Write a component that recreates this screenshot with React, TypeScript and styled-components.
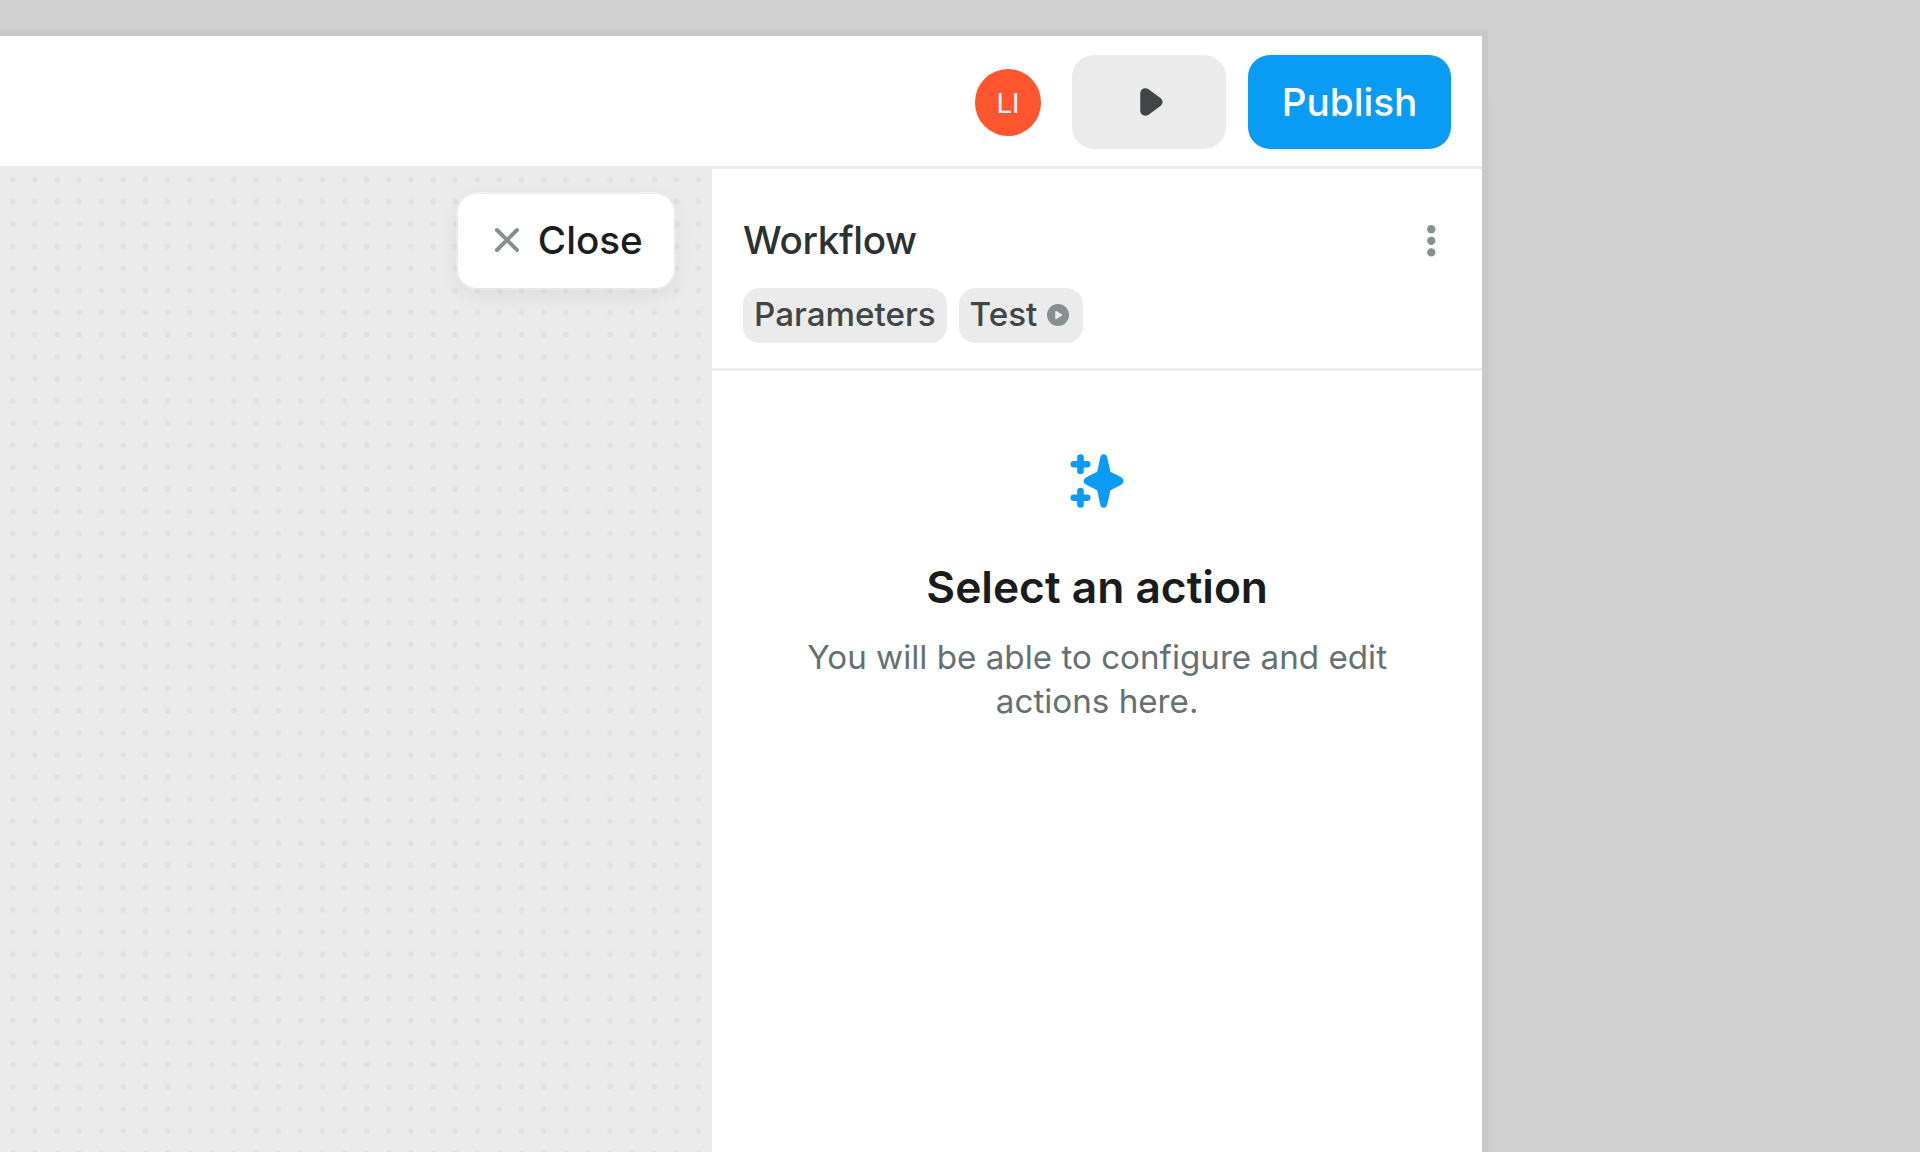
import React from "react";
import styled, { createGlobalStyle } from "styled-components";

const GlobalStyle = createGlobalStyle`
  * { box-sizing: border-box; }
  body { margin: 0; background: #d0d0d0; }
  button { border: 0; padding: 0; margin: 0; font: inherit; }
  svg { display: block; flex: none; }
`;

const Desktop = styled.main`
  height: 1152px;
  padding-top: 30px;
  overflow: hidden;
  background: #d0d0d0;
  font-family: Inter, "Liberation Sans", sans-serif;
  font-size: 38.7px;
`;

const Window = styled.div`
  display: flex;
  flex-direction: column;
  width: 1488px;
  height: 1122px;
  border: solid #c9c9c9;
  border-width: 6px 6px 0 0;
  background: #fff;
  box-shadow: 0 60px 24px rgba(0, 0, 0, 0.01);
`;

const Toolbar = styled.header`
  display: flex;
  flex: none;
  align-items: center;
  justify-content: flex-end;
  height: 133px;
  padding-right: 31.3px;
  padding-top: 2.6px;
  border-bottom: 3px solid #ebebeb;
`;

const Avatar = styled.div`
  display: flex;
  align-items: center;
  justify-content: center;
  width: 66.5px;
  height: 66.5px;
  margin-right: 30.5px;
  padding-top: 1px;
  border-radius: 50%;
  background: #ff562f;
  color: #fff;
  font-size: 27.7px;
`;

const ToolbarButton = styled.button<{ $primary?: boolean }>`
  display: flex;
  align-items: center;
  justify-content: center;
  width: ${(p) => (p.$primary ? "202.3px" : "154.7px")};
  height: 94px;
  margin-left: ${(p) => (p.$primary ? "22px" : "0")};
  border-radius: 22px;
  background: ${(p) => (p.$primary ? "#0a9bf4" : "#ebebeb")};
  color: ${(p) => (p.$primary ? "#fff" : "#404545")};
  font-weight: 480;
`;

const Body = styled.div`
  display: flex;
  flex: 1;
  min-height: 0;
`;

const Canvas = styled.section`
  display: flex;
  align-items: flex-start;
  justify-content: flex-end;
  width: 712.3px;
  padding: 24.7px 38px 0 0;
  background: radial-gradient(circle, #e1e1e1 2.5px, rgba(225, 225, 225, 0) 3.2px) 1.7px -0.3px / 22.13px 22.13px #ebebeb;
`;

const CloseButton = styled.button`
  display: flex;
  align-items: center;
  gap: 16.5px;
  width: 216.6px;
  height: 94px;
  padding: 0 0 1px 35.6px;
  border-radius: 19px;
  background: #fff;
  box-shadow: 0 0 0 2px rgba(255, 255, 255, 0.3), 0 6px 22px rgba(0, 0, 0, 0.07);
  color: #1b1e1e;
  font-weight: 480;
`;

const Panel = styled.aside`
  flex: 1;
  background: #fff;
`;

const PanelHeader = styled.div`
  height: 202px;
  padding: 48px 37px 0 30.7px;
  border-bottom: 3px solid #ebebeb;
`;

const TitleRow = styled.div`
  display: flex;
  align-items: center;
  justify-content: space-between;
  height: 47px;
`;

const Title = styled.h1`
  margin: 0;
  color: #2c3232;
  font-size: 38.7px;
  font-weight: 480;
  letter-spacing: -0.35px;
  line-height: 47px;
`;

const Tags = styled.div`
  display: flex;
  gap: 11.3px;
  margin-top: 24px;
`;

const Tag = styled.button<{ $width: number }>`
  display: flex;
  align-items: center;
  gap: 9.2px;
  width: ${(p) => p.$width}px;
  height: 55.3px;
  padding: 0 0 1px 11px;
  border-radius: 16.6px;
  background: #ebebeb;
  color: #404545;
  font-size: 33.2px;
  font-weight: 480;
`;

const TagLabel = styled.span`
  padding-bottom: 2px;
`;

const EmptyState = styled.div`
  display: flex;
  flex-direction: column;
  align-items: center;
  padding-top: 83px;
  text-align: center;
`;

const EmptyTitle = styled.h2`
  margin: 51px 0 0;
  color: #1a1c1c;
  font-size: 44.3px;
  font-weight: 600;
  line-height: 56px;
`;

const EmptyText = styled.p`
  width: 640px;
  margin: 20px 0 0;
  color: #657072;
  font-size: 33.2px;
  line-height: 44.3px;
`;

const PlaySlot = styled.span`
  padding-left: 4px;
`;

const PlayIcon = () => (
  <svg width="23" height="28" viewBox="0 0 22.5 28">
    <path
      d="M0 5.500C0 1 4.500-1 8.300 1.200L19.500 9.500C23.200 12.300 23.200 15.700 19.500 18.500L8.300 26.800C4.500 29 0 27 0 22.500Z"
      fill="currentColor"
    />
  </svg>
);

const CrossIcon = () => (
  <svg width="28" height="28" viewBox="0 0 28 28">
    <path d="M4 4L24 24M24 4L4 24" stroke="#878f90" strokeWidth="4" strokeLinecap="round" />
  </svg>
);

const MoreIcon = () => (
  <svg width="28" height="34" viewBox="0 0 28 34" fill="#878f90">
    <circle cx="14.300" cy="5.200" r="4.150" />
    <circle cx="14.300" cy="16.800" r="4.150" />
    <circle cx="14.300" cy="28.400" r="4.150" />
  </svg>
);

const RunIcon = () => (
  <svg width="22" height="22" viewBox="0 0 22 22">
    <circle cx="11" cy="11" r="11" fill="#878f90" />
    <path d="M9 7.700L14.300 11L9 14.300Z" fill="#ebebeb" stroke="#ebebeb" strokeWidth="1.600" strokeLinejoin="round" />
  </svg>
);

const SparkleIcon = () => (
  <svg width="55" height="54" viewBox="0 0 55 54" fill="#0a9bf4">
    <path
      d="M10.500 3.500V17M3.800 10.200H17.200M10.500 37V50.500M3.800 43.800H17.200"
      stroke="#0a9bf4"
      strokeWidth="6.600"
      strokeLinecap="round"
      fill="none"
    />
    <path d="M33.700 0.300Q36.300 0.300 37.200 3.500L40.500 17.800L51.200 23.200Q53.600 24.700 53.600 27Q53.600 29.300 51.200 30.800L40.500 36.200L37.200 50.500Q36.300 53.700 33.700 53.700Q31.100 53.700 30.200 50.500L27.200 36.200L16.200 30.800Q13.500 29.300 13.500 27Q13.500 24.700 16.200 23.200L27.200 17.800L30.200 3.500Q31.100 0.300 33.700 0.300Z" />
  </svg>
);

export default function App() {
  return (
    <>
      <GlobalStyle />
      <Desktop>
        <Window>
          <Toolbar>
            <Avatar>LI</Avatar>
            <ToolbarButton aria-label="Preview">
              <PlaySlot>
                <PlayIcon />
              </PlaySlot>
            </ToolbarButton>
            <ToolbarButton $primary>Publish</ToolbarButton>
          </Toolbar>
          <Body>
            <Canvas>
              <CloseButton>
                <CrossIcon />
                <span>Close</span>
              </CloseButton>
            </Canvas>
            <Panel>
              <PanelHeader>
                <TitleRow>
                  <Title>Workflow</Title>
                  <MoreIcon />
                </TitleRow>
                <Tags>
                  <Tag $width={204.3}>
                    <TagLabel>Parameters</TagLabel>
                  </Tag>
                  <Tag $width={124.3}>
                    <TagLabel>Test</TagLabel>
                    <RunIcon />
                  </Tag>
                </Tags>
              </PanelHeader>
              <EmptyState>
                <SparkleIcon />
                <EmptyTitle>Select an action</EmptyTitle>
                <EmptyText>
                  You will be able to configure and edit
                  <br />
                  actions here.
                </EmptyText>
              </EmptyState>
            </Panel>
          </Body>
        </Window>
      </Desktop>
    </>
  );
}
